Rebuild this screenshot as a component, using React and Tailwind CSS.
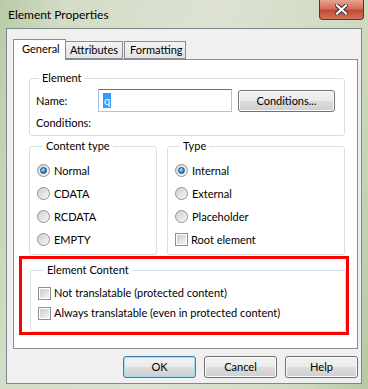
import React from "react";

const F = "font-['Lato',sans-serif] text-[11px] leading-[16px] text-black";

function Radio({ checked }) {
  return (
    <span className="w-[13px] h-[13px] rounded-full border border-[#8e8f8f] bg-[linear-gradient(135deg,#d2d4d6,#fbfbfb)] flex items-center justify-center shrink-0">
      {checked ? (
        <span className="w-[7px] h-[7px] rounded-full border border-[#1c5180] bg-[radial-gradient(circle_at_40%_35%,#bfeaff,#2a8ad4_55%,#0d4f8b)]" />
      ) : (
        <span className="w-[9px] h-[9px] rounded-full bg-[linear-gradient(135deg,#cfd1d3,#f4f4f4)]" />
      )}
    </span>
  );
}

function Check() {
  return (
    <span className="w-[13px] h-[13px] border border-[#8e8f8f] bg-white flex items-center justify-center shrink-0">
      <span className="w-[9px] h-[9px] bg-[linear-gradient(135deg,#c9cdd2,#f3f3f3)]" />
    </span>
  );
}

function Btn({ children, w, def }) {
  return (
    <div
      className={`h-[22px] ${w} rounded-[3px] border ${
        def ? "border-[#3c7fb1] shadow-[inset_0_0_0_1px_#9fdcf7]" : "border-[#707070] shadow-[inset_0_0_0_1px_#fcfcfc]"
      } bg-[linear-gradient(to_bottom,#f2f2f2_0%,#ebebeb_50%,#dddddd_50%,#cfcfcf_100%)] flex items-center justify-center`}
    >
      {children}
    </div>
  );
}

export default function App() {
  return (
    <div className={`${F} w-[368px] h-[389px] overflow-hidden flex flex-col bg-[linear-gradient(100deg,#b9cba6_0%,#d3dcc6_15%,#dde2d2_50%,#cfd9c0_85%,#b7c8a3_100%)]`}>
      {/* title bar */}
      <div className="h-[28px] flex items-start shrink-0">
        <div className="pl-[8px] pt-[7px] text-[12px] text-black">Element Properties</div>
        <div className="ml-auto mr-[4px] w-[45px] h-[20px] rounded-b-[4px] border border-t-0 border-[#6b2e27] bg-[linear-gradient(to_bottom,#e8a493_0%,#d46e58_45%,#c04a33_55%,#d4735c_100%)] flex items-center justify-center">
          <svg width="13" height="11" viewBox="0 0 13 11">
            <path d="M2 1.5 L11 9.5 M11 1.5 L2 9.5" stroke="#3b2b2b" strokeWidth="4" strokeLinecap="square" />
            <path d="M2 1.5 L11 9.5 M11 1.5 L2 9.5" stroke="#ffffff" strokeWidth="2.2" strokeLinecap="square" />
          </svg>
        </div>
      </div>
      {/* client area */}
      <div className="mx-[6px] h-[356px] border border-[#7b8a86] bg-[#f0f0f0] pt-[10px] pl-[6px] flex flex-col">
        {/* tabs */}
        <div className="flex items-end h-[20px] relative z-10">
          <div className="w-[53px] h-[21px] -mb-px border border-b-0 border-[#898c95] bg-white pl-[8px] pt-[1px]">General</div>
          <div className="w-[57px] h-[18px] border border-l-0 border-[#898c95] bg-[linear-gradient(to_bottom,#f3f3f3,#e3e3e3)] pl-[4px] mb-0">Attributes</div>
          <div className="ml-[1px] w-[62px] h-[18px] border border-[#898c95] bg-[linear-gradient(to_bottom,#f3f3f3,#e3e3e3)] pl-[5px]">Formatting</div>
        </div>
        {/* panel */}
        <div className="w-[345px] h-[290px] border border-[#898c95] bg-white pl-[15px] flex flex-col">
          {/* Element group */}
          <fieldset className="mt-[10px] w-[316px] border border-[#d5dfe5] rounded-[3px] pl-[6px] pb-[4px]">
            <legend className="ml-[3px] px-[3px]">Element</legend>
            <div className="flex items-center mt-[3px] h-[23px]">
              <div className="w-[62px]">Name:</div>
              <div className="w-[134px] h-[23px] border border-[#a4c9e3] border-t-[#3d7bad] flex items-center pl-[4px]">
                <span className="bg-[#3399ff] text-white px-[1px] leading-[15px]">q</span>
              </div>
              <div className="ml-[6px]">
                <Btn w="w-[97px]">Conditions...</Btn>
              </div>
            </div>
            <div className="mt-[3px]">Conditions:</div>
          </fieldset>
          {/* types row */}
          <div className="flex mt-[2px] gap-[10px]">
            <fieldset className="w-[128px] border border-[#d5dfe5] rounded-[3px] pl-[7px] pt-[5px] pb-[3px]">
              <legend className="ml-[6px] px-[3px]">Content type</legend>
              {["Normal", "CDATA", "RCDATA", "EMPTY"].map((t, i) => (
                <div key={t} className="h-[23px] flex items-center gap-[4px]">
                  <Radio checked={i === 0} />
                  <span>{t}</span>
                </div>
              ))}
            </fieldset>
            <fieldset className="w-[178px] border border-[#d5dfe5] rounded-[3px] pl-[7px] pt-[5px] pb-[3px]">
              <legend className="ml-[5px] px-[3px]">Type</legend>
              {["Internal", "External", "Placeholder"].map((t, i) => (
                <div key={t} className="h-[23px] flex items-center gap-[4px]">
                  <Radio checked={i === 0} />
                  <span>{t}</span>
                </div>
              ))}
              <div className="h-[23px] flex items-center gap-[3px]">
                <Check />
                <span>Root element</span>
              </div>
            </fieldset>
          </div>
          {/* red highlight */}
          <div className="-ml-[10px] mt-[1px] w-[330px] border-[3px] border-[#ff0000] pl-[8px] pt-[3px]">
            <fieldset className="w-[316px] border border-[#d5dfe5] rounded-[3px] pl-[7px] pt-[5px] pb-[8px]">
              <legend className="ml-[6px] px-[3px]">Element Content</legend>
              <div className="h-[20px] flex items-center gap-[3px]">
                <Check />
                <span>Not translatable (protected content)</span>
              </div>
              <div className="h-[20px] flex items-center gap-[3px]">
                <Check />
                <span>Always translatable (even in protected content)</span>
              </div>
            </fieldset>
          </div>
        </div>
        {/* buttons */}
        <div className="flex gap-[8px] mt-[7px] pl-[110px]">
          <Btn w="w-[73px]" def>OK</Btn>
          <Btn w="w-[73px]">Cancel</Btn>
          <Btn w="w-[73px]">Help</Btn>
        </div>
      </div>
    </div>
  );
}
